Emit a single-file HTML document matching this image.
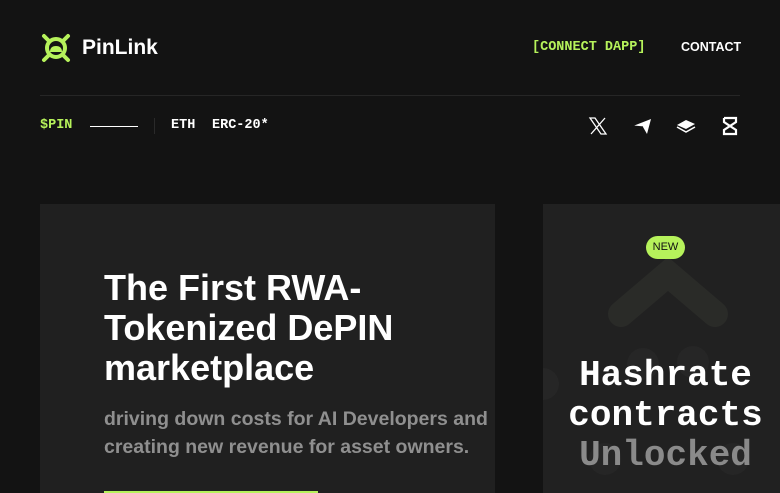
<!DOCTYPE html>
<html><head><meta charset="utf-8"><style>
*{margin:0;padding:0;box-sizing:border-box}
body{width:780px;height:493px;overflow:hidden;background:#131313;font-family:"Liberation Sans",sans-serif;color:#fff;position:relative}
.abs{position:absolute}
.mono{font-family:"Liberation Mono",monospace}
</style></head><body>
<svg class="abs" style="left:40px;top:32px" width="32" height="32" viewBox="0 0 32 32">
<g fill="none" stroke="#b6f25b" stroke-width="4" stroke-linecap="round">
<circle cx="16" cy="16" r="9"/>
<path d="M4 4l5 5M28 4l-5 5M4 28l5-5M28 28l-5-5"/>
</g>
<path d="M10 20 q0-6 6-6 q6 0 6 6z" fill="#b6f25b"/>
</svg>
<div class="abs" style="left:82px;top:36px;font-size:21px;font-weight:bold">PinLink</div>
<div class="abs mono" style="left:532px;top:40px;font-size:13.5px;color:#b6f25b;font-weight:bold">[CONNECT DAPP]</div>
<div class="abs" style="left:681px;top:40px;font-size:12.5px;font-weight:bold">CONTACT</div>
<div class="abs" style="left:40px;top:95px;width:700px;height:1px;background:#262626"></div>
<div class="abs mono" style="left:40px;top:118px;font-size:13.5px;color:#b6f25b;font-weight:bold">$PIN</div>
<div class="abs" style="left:90px;top:126px;width:48px;height:1px;background:#fff"></div>
<div class="abs" style="left:154px;top:118px;width:1px;height:16px;background:#2a2a2a"></div>
<div class="abs mono" style="left:171px;top:118px;font-size:13.5px;font-weight:bold">ETH</div>
<div class="abs mono" style="left:212px;top:118px;font-size:13.5px;font-weight:bold">ERC-20*</div>
<svg class="abs" style="left:588px;top:116px" width="20" height="20" viewBox="0 0 20 20"><path d="M2 2h5l11 16h-5z" fill="none" stroke="#fff" stroke-width="1.3"/><path d="M17 2L3 18" stroke="#fff" stroke-width="1.3"/></svg>
<svg class="abs" style="left:632px;top:116px" width="20" height="20" viewBox="0 0 20 20"><path d="M1 10L19 3 15 18 11 11z" fill="#fff"/><path d="M1 10l10 1" stroke="#131313" stroke-width="1.2"/></svg>
<svg class="abs" style="left:676px;top:117px" width="20" height="18" viewBox="0 0 20 18"><path d="M1 8l9-5 9 4-9 5z" fill="#fff"/><path d="M1 10l9 5 9-5" fill="none" stroke="#fff" stroke-width="1.5"/></svg>
<svg class="abs" style="left:721px;top:116px" width="18" height="20" viewBox="0 0 18 20"><path d="M3 2h12v4L3 14v4h12v-4L3 6V2" fill="none" stroke="#fff" stroke-width="2.2"/></svg>
<div class="abs" style="left:40px;top:204px;width:455px;height:289px;background:#202020"></div>
<div class="abs" style="left:104px;top:268px;font-size:36px;font-weight:bold;line-height:40px;width:420px">The First RWA-<br>Tokenized DePIN<br>marketplace</div>
<div class="abs" style="left:104px;top:405px;font-size:19.5px;line-height:28px;color:#8f8f8f;font-weight:bold;white-space:nowrap">driving down costs for AI Developers and<br>creating new revenue for asset owners.</div>
<div class="abs" style="left:104px;top:491px;width:214px;height:2px;background:#b6f25b"></div>
<div class="abs" style="left:543px;top:204px;width:237px;height:289px;background:#212121;overflow:hidden">
<svg class="abs" style="left:0;top:0" width="237" height="289"><path d="M78 110 L125 70 L172 110" fill="none" stroke="#2a2b28" stroke-width="26" stroke-linecap="round"/>
<circle cx="100" cy="160" r="16" fill="#262626"/><circle cx="150" cy="158" r="16" fill="#262626"/><circle cx="62" cy="255" r="16" fill="#262626"/><circle cx="190" cy="255" r="16" fill="#262626"/><circle cx="0" cy="180" r="16" fill="#262626"/></svg>
<div class="abs" style="left:103px;top:32px;width:39px;height:23px;border-radius:12px;background:#b6f25b;color:#111;font-size:11px;text-align:center;line-height:23px">NEW</div>
<div class="abs mono" style="left:4px;top:152px;width:237px;text-align:center;font-size:36px;line-height:40px;font-weight:bold">Hashrate<br>contracts<br><span style="color:#8a8a8a">Unlocked</span></div>
</div>
</body></html>
